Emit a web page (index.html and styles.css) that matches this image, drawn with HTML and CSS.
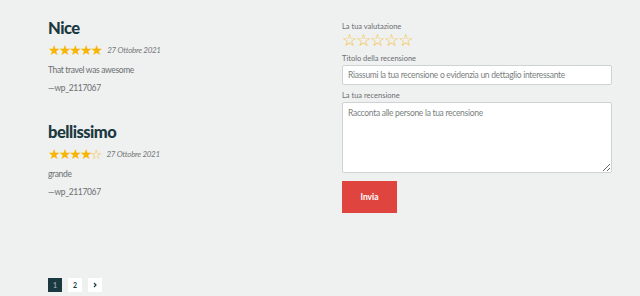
FILE: index.html
```html
<!DOCTYPE html>
<html lang="it">
<head>
    <meta charset="UTF-8">
    <meta name="viewport" content="width=device-width, initial-scale=1.0">
    <title>Recensioni</title>
    <link rel="stylesheet" href="styles.css">
</head>
<body>
    <div class="page">
        <div class="reviews">
            <div class="review">
                <h3>Nice</h3>
                <div class="meta">
                    <span class="stars">★★★★★</span>
                    <span class="date">27 Ottobre 2021</span>
                </div>
                <p class="text">That travel was awesome</p>
                <p class="author">—wp_2117067</p>
            </div>
            <div class="review">
                <h3>bellissimo</h3>
                <div class="meta">
                    <span class="stars">★★★★<span class="off">☆</span></span>
                    <span class="date">27 Ottobre 2021</span>
                </div>
                <p class="text">grande</p>
                <p class="author">—wp_2117067</p>
            </div>
        </div>

        <form class="review-form">
            <label class="label">La tua valutazione</label>
            <div class="rating">☆☆☆☆☆</div>

            <label class="label" for="titolo">Titolo della recensione</label>
            <input id="titolo" class="field" type="text" placeholder="Riassumi la tua recensione o evidenzia un dettaglio interessante">

            <label class="label" for="testo">La tua recensione</label>
            <textarea id="testo" class="field area" placeholder="Racconta alle persone la tua recensione"></textarea>

            <button type="button" class="send">Invia</button>
        </form>
    </div>

    <div class="pager">
        <span class="page-btn active">1</span>
        <span class="page-btn">2</span>
        <span class="page-btn">
            <svg width="6" height="6" viewBox="0 0 6 6"><path d="M2 1l2 2-2 2" fill="none" stroke="#1b3940" stroke-width="1.2"/></svg>
        </span>
    </div>
</body>
</html>
```

FILE: styles.css
```css
body {
    font-family: Lato, "Open Sans", sans-serif;
    background-color: #eff0f0;
    color: #6b6f70;
    margin: 0;
    height: 296px;
    overflow: hidden;
}
.page {
    display: flex;
    padding: 16px 0 0 48px;
    height: 228px;
}
.reviews {
    width: 294px;
}
.review {
    height: 102px;
}
.review h3 {
    font-family: Lato, sans-serif;
    font-weight: 900;
    font-size: 16.5px;
    letter-spacing: -0.5px;
    line-height: 20px;
    color: #1b3940;
    margin: 2px 0 4px;
}
.meta {
    display: flex;
    align-items: center;
    gap: 6px;
    height: 16px;
}
.stars {
    color: #f6b600;
    font-size: 14px;
    letter-spacing: -1.9px;
    font-family: "DejaVu Sans", sans-serif;
}
.stars .off {
    font-size: 13px;
}
.date {
    font-style: italic;
    font-size: 8px;
    letter-spacing: -0.3px;
    color: #75797a;
}
.review .text,
.review .author {
    font-size: 8.5px;
    letter-spacing: -0.35px;
    margin: 6px 0 0;
    line-height: 12px;
}
.review-form {
    width: 270px;
    display: flex;
    flex-direction: column;
    align-items: flex-start;
}
.label {
    font-size: 7.5px;
    line-height: 10px;
    color: #6b6f70;
    margin: 6px 0 1px;
}
.rating {
    color: #f6c02a;
    font-size: 17px;
    line-height: 14px;
    letter-spacing: -1.2px;
    font-family: "DejaVu Sans", sans-serif;
    margin: 0 0 1px;
}
.field {
    box-sizing: border-box;
    width: 270px;
    height: 20px;
    border: 1px solid #cfd2d4;
    border-radius: 2px;
    background: #fff;
    font-family: Lato, "Open Sans", sans-serif;
    font-size: 8.5px;
    letter-spacing: -0.3px;
    padding: 0 5px;
    color: #6b6f70;
    margin: 0;
}
.field::placeholder {
    color: #7b7f80;
}
.area {
    height: 71px;
    padding: 5px;
    resize: vertical;
}
.send {
    margin-top: 8px;
    width: 55px;
    height: 32px;
    border: none;
    background: #e0443f;
    color: #fff;
    font-family: Lato, sans-serif;
    font-weight: 700;
    font-size: 8.5px;
}
.pager {
    display: flex;
    gap: 6px;
    padding: 34px 0 0 48px;
}
.page-btn {
    width: 14px;
    height: 14px;
    background: #fff;
    color: #1b3940;
    font-size: 7px;
    font-weight: 700;
    display: flex;
    align-items: center;
    justify-content: center;
}
.page-btn.active {
    background: #1b3940;
    color: #8fa2a6;
}
```
